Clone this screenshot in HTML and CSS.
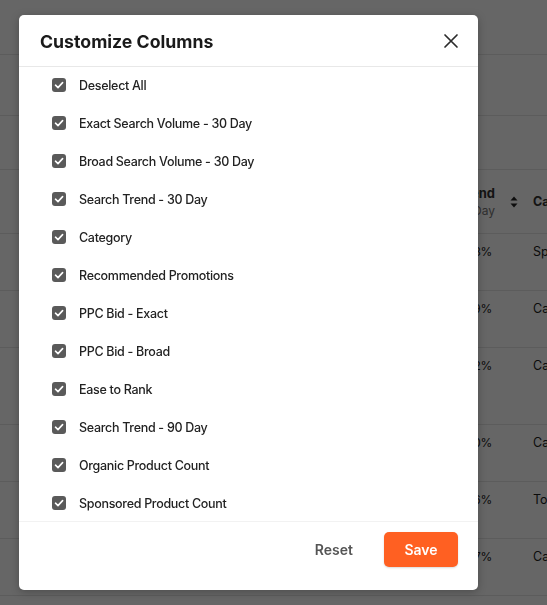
FILE: index.html
```html
<!DOCTYPE html>
<html lang="en">
<head>
  <meta charset="UTF-8">
  <meta name="viewport" content="width=device-width, initial-scale=1.0">
  <title>Customize Columns</title>
  <link rel="stylesheet" href="styles.css">
</head>
<body>
  <div class="page">
    <div class="topbar"></div>
    <div class="toolbar"></div>
    <div class="filters"></div>
    <div class="table">
      <div class="row head">
        <div class="cell"></div>
        <div class="cell trend"><span class="th">Search Trend</span><span class="sub">30 Day</span></div>
        <div class="cell sort">
          <svg width="8" height="12" viewBox="0 0 8 12"><path d="M4 0.5L7.5 4.5H0.5Z M4 11.5L7.5 7.5H0.5Z" fill="#222"/></svg>
        </div>
        <div class="cell cat th">Category</div>
      </div>
      <div class="row"><div class="cell"></div><div class="cell trend">12.3%</div><div class="cell sort"></div><div class="cell cat">Sports</div></div>
      <div class="row"><div class="cell"></div><div class="cell trend">4.9%</div><div class="cell sort"></div><div class="cell cat">Cameras</div></div>
      <div class="row tall"><div class="cell"></div><div class="cell trend">8.2%</div><div class="cell sort"></div><div class="cell cat">Cameras</div></div>
      <div class="row"><div class="cell"></div><div class="cell trend">3.0%</div><div class="cell sort"></div><div class="cell cat">Cameras</div></div>
      <div class="row"><div class="cell"></div><div class="cell trend">1.6%</div><div class="cell sort"></div><div class="cell cat">Toys</div></div>
      <div class="row"><div class="cell"></div><div class="cell trend">2.7%</div><div class="cell sort"></div><div class="cell cat">Cameras</div></div>
    </div>
  </div>

  <div class="overlay"></div>

  <div class="modal">
    <div class="modal-header">
      <h2>Customize Columns</h2>
      <button class="close" aria-label="Close">
        <svg width="16" height="16" viewBox="0 0 16 16"><path d="M2 2L14 14M14 2L2 14" stroke="#2b2b2b" stroke-width="1.7" stroke-linecap="round"/></svg>
      </button>
    </div>
    <div class="modal-body">
      <label class="item"><span class="box"><svg width="14" height="14" viewBox="0 0 14 14"><path d="M3.5 7.2L6 9.6L10.6 4.6" stroke="#fff" stroke-width="1.6" fill="none" stroke-linecap="round" stroke-linejoin="round"/></svg></span>Deselect All</label>
      <label class="item"><span class="box"><svg width="14" height="14" viewBox="0 0 14 14"><path d="M3.5 7.2L6 9.6L10.6 4.6" stroke="#fff" stroke-width="1.6" fill="none" stroke-linecap="round" stroke-linejoin="round"/></svg></span>Exact Search Volume - 30 Day</label>
      <label class="item"><span class="box"><svg width="14" height="14" viewBox="0 0 14 14"><path d="M3.5 7.2L6 9.6L10.6 4.6" stroke="#fff" stroke-width="1.6" fill="none" stroke-linecap="round" stroke-linejoin="round"/></svg></span>Broad Search Volume - 30 Day</label>
      <label class="item"><span class="box"><svg width="14" height="14" viewBox="0 0 14 14"><path d="M3.5 7.2L6 9.6L10.6 4.6" stroke="#fff" stroke-width="1.6" fill="none" stroke-linecap="round" stroke-linejoin="round"/></svg></span>Search Trend - 30 Day</label>
      <label class="item"><span class="box"><svg width="14" height="14" viewBox="0 0 14 14"><path d="M3.5 7.2L6 9.6L10.6 4.6" stroke="#fff" stroke-width="1.6" fill="none" stroke-linecap="round" stroke-linejoin="round"/></svg></span>Category</label>
      <label class="item"><span class="box"><svg width="14" height="14" viewBox="0 0 14 14"><path d="M3.5 7.2L6 9.6L10.6 4.6" stroke="#fff" stroke-width="1.6" fill="none" stroke-linecap="round" stroke-linejoin="round"/></svg></span>Recommended Promotions</label>
      <label class="item"><span class="box"><svg width="14" height="14" viewBox="0 0 14 14"><path d="M3.5 7.2L6 9.6L10.6 4.6" stroke="#fff" stroke-width="1.6" fill="none" stroke-linecap="round" stroke-linejoin="round"/></svg></span>PPC Bid - Exact</label>
      <label class="item"><span class="box"><svg width="14" height="14" viewBox="0 0 14 14"><path d="M3.5 7.2L6 9.6L10.6 4.6" stroke="#fff" stroke-width="1.6" fill="none" stroke-linecap="round" stroke-linejoin="round"/></svg></span>PPC Bid - Broad</label>
      <label class="item"><span class="box"><svg width="14" height="14" viewBox="0 0 14 14"><path d="M3.5 7.2L6 9.6L10.6 4.6" stroke="#fff" stroke-width="1.6" fill="none" stroke-linecap="round" stroke-linejoin="round"/></svg></span>Ease to Rank</label>
      <label class="item"><span class="box"><svg width="14" height="14" viewBox="0 0 14 14"><path d="M3.5 7.2L6 9.6L10.6 4.6" stroke="#fff" stroke-width="1.6" fill="none" stroke-linecap="round" stroke-linejoin="round"/></svg></span>Search Trend - 90 Day</label>
      <label class="item"><span class="box"><svg width="14" height="14" viewBox="0 0 14 14"><path d="M3.5 7.2L6 9.6L10.6 4.6" stroke="#fff" stroke-width="1.6" fill="none" stroke-linecap="round" stroke-linejoin="round"/></svg></span>Organic Product Count</label>
      <label class="item"><span class="box"><svg width="14" height="14" viewBox="0 0 14 14"><path d="M3.5 7.2L6 9.6L10.6 4.6" stroke="#fff" stroke-width="1.6" fill="none" stroke-linecap="round" stroke-linejoin="round"/></svg></span>Sponsored Product Count</label>
      <label class="item"><span class="box"><svg width="14" height="14" viewBox="0 0 14 14"><path d="M3.5 7.2L6 9.6L10.6 4.6" stroke="#fff" stroke-width="1.6" fill="none" stroke-linecap="round" stroke-linejoin="round"/></svg></span>Competing Products</label>
    </div>
    <div class="modal-footer">
      <button class="btn-reset">Reset</button>
      <button class="btn-save">Save</button>
    </div>
  </div>
</body>
</html>
```

FILE: styles.css
```css
body {
  margin: 0;
  font-family: Inter, "Noto Sans", sans-serif;
  background-color: #fff;
  color: #1c1c1c;
  overflow: hidden;
  height: 605px;
}
.page {
  width: 547px;
  overflow: hidden;
}
.topbar {
  height: 54px;
  border-bottom: 1px solid #e6e6e6;
}
.toolbar {
  height: 60px;
  border-bottom: 1px solid #e6e6e6;
}
.filters {
  height: 53px;
  border-bottom: 1px solid #e6e6e6;
}
.row {
  display: grid;
  grid-template-columns: 390px 101px 42px 127px;
  height: 56px;
  border-bottom: 1px solid #e6e6e6;
  font-size: 12.5px;
  line-height: 20px;
}
.row.head {
  height: 63px;
  align-items: center;
}
.row.tall {
  height: 76px;
}
.cell {
  padding-top: 8px;
  white-space: nowrap;
}
.head .cell {
  padding-top: 0;
}
.trend {
  text-align: right;
  font-size: 12px;
  letter-spacing: -0.3px;
  margin-right: -1px;
}
.head .trend {
  display: flex;
  flex-direction: column;
  align-items: flex-end;
  margin-right: -4px;
  padding-bottom: 2px;
  font-size: 13px;
  letter-spacing: 0;
}
.th {
  font-weight: 700;
  color: #333;
}
.sub {
  font-size: 12px;
  line-height: 16px;
  color: #777;
}
.sort {
  display: flex;
  justify-content: center;
  padding-left: 3px;
}
.overlay {
  position: fixed;
  inset: 0;
  background-color: rgba(0, 0, 0, 0.6);
}
.modal {
  position: absolute;
  top: 15px;
  left: 19px;
  width: 459px;
  height: 575px;
  background-color: #fff;
  border-radius: 5px;
  box-shadow: 0 2px 8px rgba(0, 0, 0, 0.25);
  display: flex;
  flex-direction: column;
  overflow: hidden;
}
.modal-header {
  height: 52px;
  box-sizing: border-box;
  border-bottom: 1px solid #e8e8e8;
  display: flex;
  align-items: center;
  justify-content: space-between;
  padding: 0 19px 0 21px;
}
.modal-header h2 {
  margin: 0;
  font-size: 17.7px;
  font-weight: 700;
  color: #1a1a1a;
  margin-top: 1px;
}
.close {
  border: none;
  background: none;
  padding: 0;
  width: 16px;
  height: 16px;
  cursor: pointer;
}
.modal-body {
  height: 454px;
  overflow: hidden;
  padding: 0 33px;
  margin-top: -1px;
}
.item {
  display: flex;
  align-items: center;
  gap: 13px;
  height: 38px;
  font-size: 12.5px;
  font-weight: 500;
  letter-spacing: -0.3px;
  color: #222;
}
.box {
  width: 14px;
  height: 14px;
  border-radius: 3px;
  background-color: #5a5a5a;
  display: flex;
}
.modal-footer {
  border-top: 1px solid #f2f2f2;
  flex: 1;
  display: flex;
  justify-content: flex-end;
  align-items: flex-start;
  padding: 10px 20px 0 0;
  gap: 15px;
  margin-top: 1px;
}
.modal-footer button {
  font-family: inherit;
  font-size: 14px;
  font-weight: 600;
  border: none;
  cursor: pointer;
  height: 35px;
}
.btn-reset {
  background: none;
  color: #555;
  padding: 0 16px;
}
.btn-save {
  width: 74px;
  background-color: #ff6022;
  color: #fff;
  border-radius: 5px;
  box-shadow: 0 1px 2px rgba(0, 0, 0, 0.15);
}
```
